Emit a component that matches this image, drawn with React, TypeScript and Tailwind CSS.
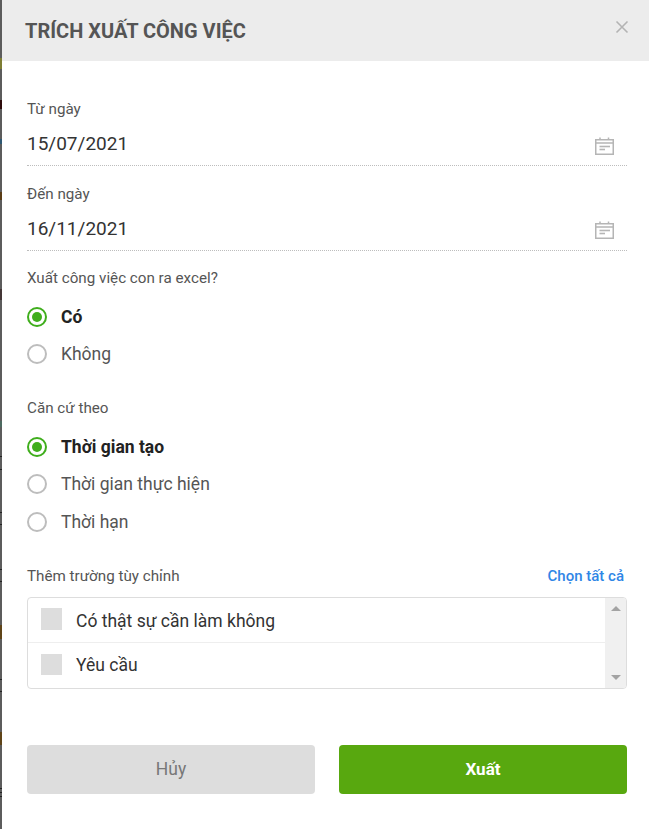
const font = "font-['Roboto',sans-serif]";

// Page behind the overlay, showing through the 2px strip at the left edge: [gap above, height, colour]
const strip: [number, number, string][] = [
  [58, 11, "#7d7d33"],
  [31, 9, "#2e0c0c"],
  [30, 5, "#2f5872"],
  [48, 8, "#5a3c16"],
  [89, 11, "#443636"],
  [121, 6, "#4c6a60"],
  [29, 1, "#222222"],
  [12, 1, "#222222"],
  [42, 1, "#222222"],
  [11, 1, "#222222"],
  [44, 1, "#222222"],
  [11, 1, "#222222"],
  [43, 14, "#5f4418"],
  [40, 1, "#222222"],
  [11, 1, "#222222"],
  [40, 13, "#5f4418"],
  [43, 1, "#222222"],
  [3, 1, "#222222"],
  [3, 1, "#222222"],
];

function CalendarIcon() {
  return (
    <svg width="19" height="18" viewBox="0 0 19 18" fill="none" stroke="#b5b5b5" strokeWidth="1.5">
      <rect x="0.75" y="2.75" width="17.5" height="14.5" />
      <path d="M1 6H18" />
      <path d="M5 0.5V3M13.5 0.5V3" />
      <path d="M4.5 9.5H15" strokeWidth="1.6" />
      <path d="M4.5 12.5H10" strokeWidth="1.6" />
    </svg>
  );
}

function DateField({ label, value, iconClass }: { label: string; value: string; iconClass: string }) {
  return (
    <div className="flex flex-col">
      <div className="h-[17px] text-[15.2px] leading-[17px] text-[#555555]">{label}</div>
      <div className="mt-[8px] flex h-[40px] items-center justify-between border-b border-dotted border-[#bdbdbd] pb-[1px]">
        <span className="mb-[2px] text-[19px] leading-[24px] text-[#333333]">{value}</span>
        <span className={iconClass}>
          <CalendarIcon />
        </span>
      </div>
    </div>
  );
}

function Radio({ label, checked }: { label: string; checked?: boolean }) {
  return (
    <div className="flex h-[20px] items-center gap-[14px]">
      {checked ? (
        <span className="flex h-[20px] w-[20px] items-center justify-center rounded-full border-2 border-[#3fae1c]">
          <span className="h-[10px] w-[10px] rounded-full bg-[#3fae1c]" />
        </span>
      ) : (
        <span className="h-[20px] w-[20px] rounded-full border-2 border-[#bdbdbd]" />
      )}
      <span className={checked ? "text-[17.5px] font-bold text-[#222222]" : "text-[17.5px] text-[#555555]"}>{label}</span>
    </div>
  );
}

export default function App() {
  return (
    <div className={`${font} flex h-[829px] w-[649px] overflow-hidden bg-[#5c5c5c]`}>
      <div className="flex w-[2px] shrink-0 flex-col">
        {strip.map(([gap, height, color], i) => (
          <div key={i} style={{ marginTop: gap, height, backgroundColor: color }} />
        ))}
      </div>
      <div className="flex w-[647px] flex-col bg-white">
        <div className="flex h-[61px] shrink-0 items-center justify-between bg-[#ececec] pl-[23px] pr-[20px]">
          <h1 className="text-[20px] font-bold text-[#555555]">TRÍCH XUẤT CÔNG VIỆC</h1>
          <svg width="14" height="14" viewBox="0 0 14 14" stroke="#b3b3b3" strokeWidth="1.6" className="mb-[8px]">
            <path d="M1.5 1.5L12.5 12.5M12.5 1.5L1.5 12.5" />
          </svg>
        </div>
        <div className="flex flex-col pl-[25px] pr-[22px]">
          <div className="mt-[40px] flex flex-col gap-[20px]">
            <DateField label="Từ ngày" value="15/07/2021" iconClass="mr-[13px] mt-[1px] flex" />
            <DateField label="Đến ngày" value="16/11/2021" iconClass="mr-[13px] mb-[1px] flex" />
          </div>
          <div className="mt-[19px] h-[17px] text-[15.2px] leading-[17px] text-[#555555]">Xuất công việc con ra excel?</div>
          <div className="mt-[20px] flex flex-col gap-[17px]">
            <Radio label="Có" checked />
            <Radio label="Không" />
          </div>
          <div className="mt-[36px] h-[17px] text-[15.2px] leading-[17px] text-[#555555]">Căn cứ theo</div>
          <div className="mt-[20px] flex flex-col">
            <Radio label="Thời gian tạo" checked />
            <div className="mt-[17px]">
              <Radio label="Thời gian thực hiện" />
            </div>
            <div className="mt-[18px]">
              <Radio label="Thời hạn" />
            </div>
          </div>
          <div className="mt-[36px] flex h-[17px] items-center justify-between">
            <span className="text-[15.2px] leading-[17px] text-[#555555]">Thêm trường tùy chỉnh</span>
            <span className="mr-[3px] text-[15px] font-medium leading-[17px] text-[#2f86e6]">Chọn tất cả</span>
          </div>
          <div className="mt-[12px] flex h-[92px] overflow-hidden rounded-[4px] border border-[#dddddd]">
            <div className="flex flex-1 flex-col">
              <div className="flex h-[45px] items-center gap-[14px] border-b border-[#eeeeee] pl-[13px]">
                <span className="mb-[2px] h-[22px] w-[21px] bg-[#dddddd]" />
                <span className="mt-[2px] text-[17.5px] text-[#333333]">Có thật sự cần làm không</span>
              </div>
              <div className="flex h-[45px] items-center gap-[14px] pl-[13px]">
                <span className="mb-[3px] h-[21px] w-[21px] bg-[#dddddd]" />
                <span className="text-[17.5px] text-[#333333]">Yêu cầu</span>
              </div>
            </div>
            <div className="flex w-[21px] flex-col items-center justify-between bg-[#f0f0f0] py-[8px]">
              <span className="h-0 w-0 border-x-[5px] border-b-[5px] border-x-transparent border-b-[#a3a3a3]" />
              <span className="h-0 w-0 border-x-[5px] border-t-[5px] border-x-transparent border-t-[#a3a3a3]" />
            </div>
          </div>
          <div className="mt-[56px] flex justify-between">
            <button className="h-[49px] w-[288px] rounded-[4px] bg-[#dddddd] text-[17.5px] text-[#777777]">Hủy</button>
            <button className="h-[49px] w-[288px] rounded-[4px] bg-[#58a80f] text-[17px] font-bold text-white">Xuất</button>
          </div>
        </div>
      </div>
    </div>
  );
}
